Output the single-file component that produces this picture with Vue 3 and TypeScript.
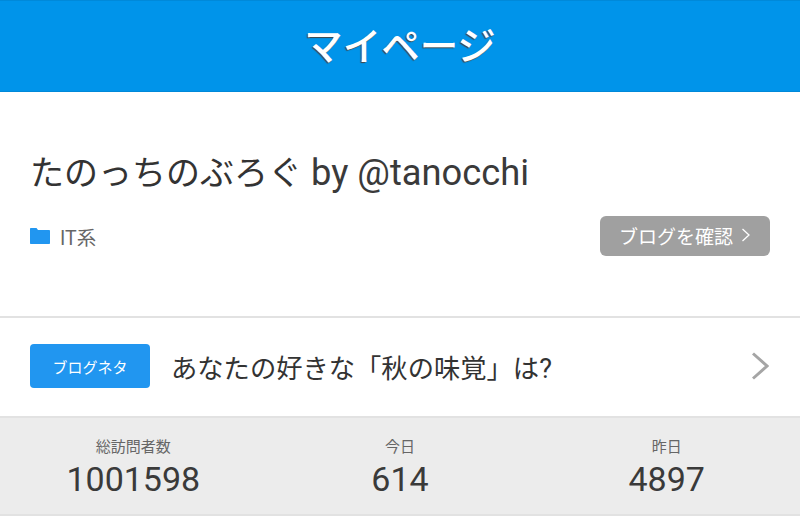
<script setup lang="ts">
const stats = [
  { label: '総訪問者数', value: 1001598 },
  { label: '今日', value: 614 },
  { label: '昨日', value: 4897 },
]
</script>

<template>
  <div class="page">
    <header class="header">
      <h1>マイページ</h1>
    </header>
    <section class="blog">
      <h2><span class="jp">たのっちのぶろぐ</span> by @tanocchi</h2>
      <div class="blog-meta">
        <div class="category">
          <svg width="20" height="16" viewBox="0 0 20 16">
            <path d="M0 1C0 .4.4 0 1 0h5.500l1.500 2h11c.6 0 1 .4 1 1v12c0 .6-.4 1-1 1H1c-.6 0-1-.4-1-1z" fill="#2196f0" />
          </svg>
          <span>IT系</span>
        </div>
        <a class="check-btn">
          ブログを確認
          <svg width="10" height="16" viewBox="0 0 10 16">
            <path d="M1.500 2l6.500 6-6.500 6" fill="none" stroke="#fff" stroke-width="1.300" />
          </svg>
        </a>
      </div>
    </section>
    <section class="neta">
      <span class="tag">ブログネタ</span>
      <span class="neta-title"><span class="jp-small">あなたの好きな「秋の味覚」は</span>?</span>
      <svg class="arrow" width="18" height="28" viewBox="0 0 18 28">
        <path d="M2 1.500l14 12.500-14 12.500" fill="none" stroke="#a5a5a5" stroke-width="3" />
      </svg>
    </section>
    <section class="stats">
      <div v-for="s in stats" :key="s.label" class="stat">
        <div class="stat-label">{{ s.label }}</div>
        <div class="stat-value">{{ s.value }}</div>
      </div>
    </section>
  </div>
</template>

<style scoped>
.page {
  width: 800px;
  height: 521px;
  overflow: hidden;
  background: #fff;
  font-family: Roboto, "Noto Sans CJK JP", sans-serif;
  color: #333;
}
.header {
  height: 92px;
  box-sizing: border-box;
  background: #0094ea;
  border-top: 1px solid #0089d9;
  border-bottom: 1px solid #0089d9;
  display: flex;
  align-items: center;
  justify-content: center;
  padding-bottom: 6px;
}
.header h1 {
  margin: 0;
  font-size: 38.500px;
  font-weight: 500;
  color: #fff;
  text-shadow: -1px 1px 1px #444;
}
.blog {
  height: 224px;
  box-sizing: border-box;
  padding: 58px 30px 0;
}
.blog h2 {
  margin: 0;
  font-size: 36.300px;
  line-height: 46px;
  font-weight: 400;
  color: #3a3a3a;
}
.jp {
  font-size: 34px;
  color: #333;
}
.blog-meta {
  display: flex;
  justify-content: space-between;
  align-items: center;
  margin-top: 20px;
}
.category {
  display: flex;
  align-items: center;
  gap: 10px;
  font-size: 19.500px;
  color: #666;
}
.check-btn {
  width: 170px;
  height: 40px;
  box-sizing: border-box;
  display: flex;
  align-items: center;
  justify-content: center;
  gap: 8px;
  padding-bottom: 2px;
  background: #a0a0a0;
  border-radius: 6px;
  color: #fff;
  font-size: 19px;
}
.neta {
  height: 102px;
  box-sizing: border-box;
  border-top: 2px solid #e2e2e2;
  border-bottom: 2px solid #e2e2e2;
  display: flex;
  align-items: center;
  padding: 0 31px 2px 30px;
}
.tag {
  width: 120px;
  height: 44px;
  display: flex;
  align-items: center;
  justify-content: center;
  background: #2196f0;
  border-radius: 4px;
  color: #fff;
  font-size: 15px;
}
.neta-title {
  flex: 1;
  margin-left: 21px;
  font-size: 27px;
}
.jp-small {
  font-size: 26.300px;
}
.stats {
  height: 98px;
  box-sizing: border-box;
  background: #ececec;
  border-bottom: 2px solid #e2e2e2;
  display: grid;
  grid-template-columns: repeat(3, 1fr);
  padding-top: 19px;
}
.stat {
  text-align: center;
}
.stat-label {
  font-size: 15px;
  line-height: 20px;
  color: #666;
}
.stat-value {
  margin-top: 1px;
  font-size: 34px;
  line-height: 42px;
  font-weight: 400;
  color: #3a3a3a;
}
</style>
